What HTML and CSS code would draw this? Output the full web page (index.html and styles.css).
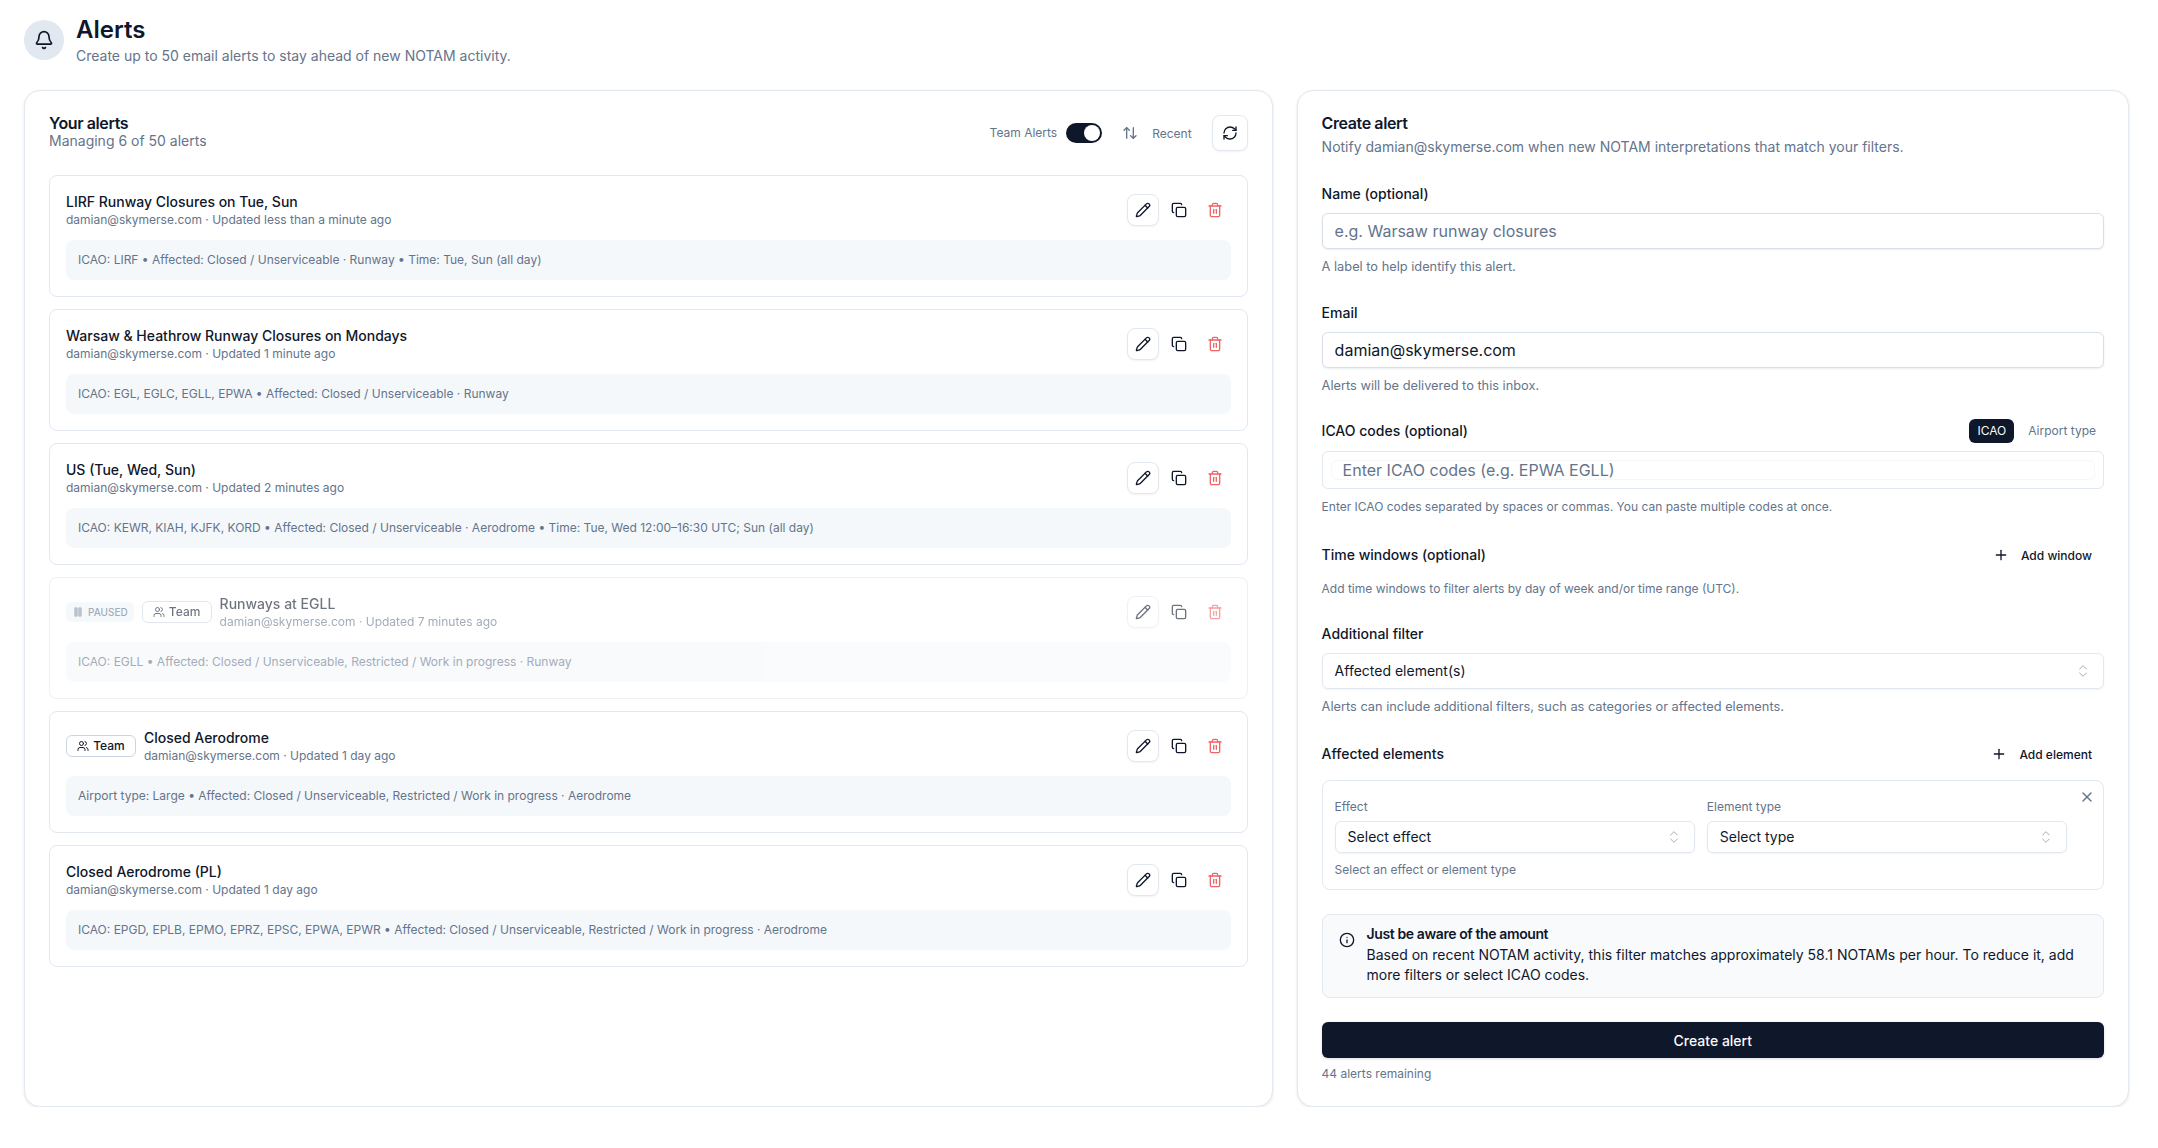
FILE: index.html
```html
<!DOCTYPE html>
<html lang="en">
<head>
    <meta charset="UTF-8">
    <meta name="viewport" content="width=device-width, initial-scale=1.0">
    <title>Alerts</title>
    <link rel="stylesheet" href="styles.css">
</head>
<body>
    <svg class="sprite" aria-hidden="true">
        <symbol id="i-bell" viewBox="0 0 24 24"><path d="M10.268 21a2 2 0 0 0 3.464 0"/><path d="M3.262 15.326A1 1 0 0 0 4 17h16a1 1 0 0 0 .74-1.673C19.41 13.956 18 12.499 18 8A6 6 0 0 0 6 8c0 4.499-1.411 5.956-2.738 7.326"/></symbol>
        <symbol id="i-pencil" viewBox="0 0 24 24"><path d="M21.174 6.812a1 1 0 0 0-3.986-3.987L3.842 16.174a2 2 0 0 0-.5.83l-1.321 4.352a.5.5 0 0 0 .623.622l4.353-1.32a2 2 0 0 0 .83-.497z"/><path d="m15 5 4 4"/></symbol>
        <symbol id="i-copy" viewBox="0 0 24 24"><rect x="8" y="8" width="14" height="14" rx="2"/><path d="M4 16c-1.1 0-2-.9-2-2V4c0-1.1.9-2 2-2h10c1.100 0 2 .9 2 2"/></symbol>
        <symbol id="i-trash" viewBox="0 0 24 24"><path d="M3 6h18"/><path d="M19 6v14c0 1-1 2-2 2H7c-1 0-2-1-2-2V6"/><path d="M8 6V4c0-1 1-2 2-2h4c1 0 2 1 2 2v2"/><path d="M10 11v6"/><path d="M14 11v6"/></symbol>
        <symbol id="i-refresh" viewBox="0 0 24 24"><path d="M3 12a9 9 0 0 1 9-9 9.75 9.75 0 0 1 6.74 2.74L21 8"/><path d="M21 3v5h-5"/><path d="M21 12a9 9 0 0 1-9 9 9.75 9.75 0 0 1-6.74-2.74L3 16"/><path d="M8 16H3v5"/></symbol>
        <symbol id="i-sort" viewBox="0 0 24 24"><path d="m21 16-4 4-4-4"/><path d="M17 20V4"/><path d="m3 8 4-4 4 4"/><path d="M7 4v16"/></symbol>
        <symbol id="i-users" viewBox="0 0 24 24"><path d="M16 21v-2a4 4 0 0 0-4-4H6a4 4 0 0 0-4 4v2"/><circle cx="9" cy="7" r="4"/><path d="M22 21v-2a4 4 0 0 0-3-3.870"/><path d="M16 3.130a4 4 0 0 1 0 7.750"/></symbol>
        <symbol id="i-plus" viewBox="0 0 24 24"><path d="M5 12h14"/><path d="M12 5v14"/></symbol>
        <symbol id="i-x" viewBox="0 0 24 24"><path d="M18 6 6 18"/><path d="m6 6 12 12"/></symbol>
        <symbol id="i-chevrons" viewBox="0 0 24 24"><path d="m7 15 5 5 5-5"/><path d="m7 9 5-5 5 5"/></symbol>
        <symbol id="i-info" viewBox="0 0 24 24"><circle cx="12" cy="12" r="10"/><path d="M12 16v-4"/><path d="M12 8h.01"/></symbol>
        <symbol id="i-pause" viewBox="0 0 24 24"><rect x="14" y="4" width="4" height="16" rx="1"/><rect x="6" y="4" width="4" height="16" rx="1"/></symbol>
    </svg>

    <div class="page">
        <header class="page-header">
            <div class="header-icon"><svg class="icon icon-20"><use href="#i-bell"/></svg></div>
            <div>
                <h1>Alerts</h1>
                <p class="header-sub">Create up to 50 email alerts to stay ahead of new NOTAM activity.</p>
            </div>
        </header>

        <main class="columns">
            <section class="panel">
                <div class="list-head">
                    <div>
                        <h2>Your alerts</h2>
                        <p class="list-count">Managing 6 of 50 alerts</p>
                    </div>
                    <div class="toolbar">
                        <span class="toolbar-label">Team Alerts</span>
                        <span class="switch"><span class="switch-knob"></span></span>
                        <button class="sort-btn"><svg class="icon"><use href="#i-sort"/></svg>Recent</button>
                        <button class="icon-btn icon-btn-lg"><svg class="icon"><use href="#i-refresh"/></svg></button>
                    </div>
                </div>

                <div class="alert-list">
                    <article class="alert-card">
                        <div class="alert-top">
                            <div class="alert-title-row">
                                <div>
                                    <h3>LIRF Runway Closures on Tue, Sun</h3>
                                    <p class="alert-meta">damian@skymerse.com · Updated less than a minute ago</p>
                                </div>
                            </div>
                            <div class="alert-actions">
                                <button class="icon-btn"><svg class="icon"><use href="#i-pencil"/></svg></button>
                                <button class="ghost-btn"><svg class="icon"><use href="#i-copy"/></svg></button>
                                <button class="ghost-btn danger"><svg class="icon"><use href="#i-trash"/></svg></button>
                            </div>
                        </div>
                        <p class="alert-summary">ICAO: LIRF • Affected: Closed / Unserviceable · Runway • Time: Tue, Sun (all day)</p>
                    </article>

                    <article class="alert-card">
                        <div class="alert-top">
                            <div class="alert-title-row">
                                <div>
                                    <h3>Warsaw &amp; Heathrow Runway Closures on Mondays</h3>
                                    <p class="alert-meta">damian@skymerse.com · Updated 1 minute ago</p>
                                </div>
                            </div>
                            <div class="alert-actions">
                                <button class="icon-btn"><svg class="icon"><use href="#i-pencil"/></svg></button>
                                <button class="ghost-btn"><svg class="icon"><use href="#i-copy"/></svg></button>
                                <button class="ghost-btn danger"><svg class="icon"><use href="#i-trash"/></svg></button>
                            </div>
                        </div>
                        <p class="alert-summary">ICAO: EGL, EGLC, EGLL, EPWA • Affected: Closed / Unserviceable · Runway</p>
                    </article>

                    <article class="alert-card">
                        <div class="alert-top">
                            <div class="alert-title-row">
                                <div>
                                    <h3>US (Tue, Wed, Sun)</h3>
                                    <p class="alert-meta">damian@skymerse.com · Updated 2 minutes ago</p>
                                </div>
                            </div>
                            <div class="alert-actions">
                                <button class="icon-btn"><svg class="icon"><use href="#i-pencil"/></svg></button>
                                <button class="ghost-btn"><svg class="icon"><use href="#i-copy"/></svg></button>
                                <button class="ghost-btn danger"><svg class="icon"><use href="#i-trash"/></svg></button>
                            </div>
                        </div>
                        <p class="alert-summary">ICAO: KEWR, KIAH, KJFK, KORD • Affected: Closed / Unserviceable · Aerodrome • Time: Tue, Wed 12:00–16:30 UTC; Sun (all day)</p>
                    </article>

                    <article class="alert-card paused">
                        <div class="alert-top">
                            <div class="alert-title-row">
                                <span class="paused-badge"><svg class="icon icon-fill"><use href="#i-pause"/></svg>PAUSED</span>
                                <span class="team-badge"><svg class="icon icon-12"><use href="#i-users"/></svg>Team</span>
                                <div>
                                    <h3>Runways at EGLL</h3>
                                    <p class="alert-meta">damian@skymerse.com · Updated 7 minutes ago</p>
                                </div>
                            </div>
                            <div class="alert-actions">
                                <button class="icon-btn"><svg class="icon"><use href="#i-pencil"/></svg></button>
                                <button class="ghost-btn"><svg class="icon"><use href="#i-copy"/></svg></button>
                                <button class="ghost-btn danger"><svg class="icon"><use href="#i-trash"/></svg></button>
                            </div>
                        </div>
                        <p class="alert-summary">ICAO: EGLL • Affected: Closed / Unserviceable, Restricted / Work in progress · Runway</p>
                    </article>

                    <article class="alert-card">
                        <div class="alert-top">
                            <div class="alert-title-row">
                                <span class="team-badge"><svg class="icon icon-12"><use href="#i-users"/></svg>Team</span>
                                <div>
                                    <h3>Closed Aerodrome</h3>
                                    <p class="alert-meta">damian@skymerse.com · Updated 1 day ago</p>
                                </div>
                            </div>
                            <div class="alert-actions">
                                <button class="icon-btn"><svg class="icon"><use href="#i-pencil"/></svg></button>
                                <button class="ghost-btn"><svg class="icon"><use href="#i-copy"/></svg></button>
                                <button class="ghost-btn danger"><svg class="icon"><use href="#i-trash"/></svg></button>
                            </div>
                        </div>
                        <p class="alert-summary">Airport type: Large • Affected: Closed / Unserviceable, Restricted / Work in progress · Aerodrome</p>
                    </article>

                    <article class="alert-card">
                        <div class="alert-top">
                            <div class="alert-title-row">
                                <div>
                                    <h3>Closed Aerodrome (PL)</h3>
                                    <p class="alert-meta">damian@skymerse.com · Updated 1 day ago</p>
                                </div>
                            </div>
                            <div class="alert-actions">
                                <button class="icon-btn"><svg class="icon"><use href="#i-pencil"/></svg></button>
                                <button class="ghost-btn"><svg class="icon"><use href="#i-copy"/></svg></button>
                                <button class="ghost-btn danger"><svg class="icon"><use href="#i-trash"/></svg></button>
                            </div>
                        </div>
                        <p class="alert-summary">ICAO: EPGD, EPLB, EPMO, EPRZ, EPSC, EPWA, EPWR • Affected: Closed / Unserviceable, Restricted / Work in progress · Aerodrome</p>
                    </article>
                </div>
            </section>

            <section class="panel">
                <h2>Create alert</h2>
                <p class="form-sub">Notify damian@skymerse.com when new NOTAM interpretations that match your filters.</p>

                <div class="field">
                    <label class="field-label">Name (optional)</label>
                    <input class="text-input" type="text" placeholder="e.g. Warsaw runway closures">
                    <p class="help help-md">A label to help identify this alert.</p>
                </div>

                <div class="field field-email">
                    <label class="field-label">Email</label>
                    <input class="text-input" type="text" value="damian@skymerse.com">
                    <p class="help help-md">Alerts will be delivered to this inbox.</p>
                </div>

                <div class="field field-icao">
                    <div class="field-row field-row-icao">
                        <label class="field-label-plain">ICAO codes (optional)</label>
                        <div class="mode-tabs">
                            <span class="mode-tab active">ICAO</span>
                            <span class="mode-tab">Airport type</span>
                        </div>
                    </div>
                    <div class="code-input">
                        <input type="text" placeholder="Enter ICAO codes (e.g. EPWA EGLL)">
                    </div>
                    <p class="help">Enter ICAO codes separated by spaces or commas. You can paste multiple codes at once.</p>
                </div>

                <div class="field field-control">
                    <div class="field-row">
                        <label class="field-label-plain">Time windows (optional)</label>
                        <button class="add-btn"><svg class="icon"><use href="#i-plus"/></svg>Add window</button>
                    </div>
                    <p class="help">Add time windows to filter alerts by day of week and/or time range (UTC).</p>
                </div>

                <div class="field">
                    <label class="field-label">Additional filter</label>
                    <div class="select">Affected element(s)<svg class="icon select-chevron"><use href="#i-chevrons"/></svg></div>
                    <p class="help help-md">Alerts can include additional filters, such as categories or affected elements.</p>
                </div>

                <div class="field field-affected">
                    <div class="field-row">
                        <label class="field-label-plain">Affected elements</label>
                        <button class="add-btn"><svg class="icon"><use href="#i-plus"/></svg>Add element</button>
                    </div>
                    <div class="element-box">
                        <svg class="icon element-remove"><use href="#i-x"/></svg>
                        <div class="element-grid">
                            <div>
                                <p class="element-label">Effect</p>
                                <div class="select select-sm">Select effect<svg class="icon select-chevron"><use href="#i-chevrons"/></svg></div>
                            </div>
                            <div>
                                <p class="element-label">Element type</p>
                                <div class="select select-sm">Select type<svg class="icon select-chevron"><use href="#i-chevrons"/></svg></div>
                            </div>
                        </div>
                        <p class="help help-tight">Select an effect or element type</p>
                    </div>
                </div>

                <div class="notice">
                    <svg class="icon notice-icon"><use href="#i-info"/></svg>
                    <div>
                        <p class="notice-title">Just be aware of the amount</p>
                        <p>Based on recent NOTAM activity, this filter matches approximately 58.1 NOTAMs per hour. To reduce it, add more filters or select ICAO codes.</p>
                    </div>
                </div>

                <button class="submit-btn">Create alert</button>
                <p class="remaining">44 alerts remaining</p>
            </section>
        </main>
    </div>
</body>
</html>
```

FILE: styles.css
```css
* {
    margin: 0;
    padding: 0;
    box-sizing: border-box;
}

body {
    background: #ffffff;
    color: #0f172a;
    font-family: 'Inter', 'Liberation Sans', sans-serif;
    font-size: 14px;
    line-height: 20px;
}

button {
    font-family: inherit;
    background: none;
    border: none;
    color: inherit;
}

.sprite {
    display: none;
}

.icon {
    width: 16px;
    height: 16px;
    flex-shrink: 0;
    fill: none;
    stroke: currentColor;
    stroke-width: 2;
    stroke-linecap: round;
    stroke-linejoin: round;
}

.icon-20 {
    width: 20px;
    height: 20px;
}

.icon-12 {
    width: 12px;
    height: 12px;
}

.icon-fill {
    width: 12px;
    height: 12px;
    fill: currentColor;
    stroke-width: 3;
    opacity: 0.7;
}

.page {
    padding: 14px 29px 0 24px;
}

/* Header */
.page-header {
    display: flex;
    align-items: center;
    gap: 12px;
}

.header-icon {
    width: 40px;
    height: 40px;
    border-radius: 50%;
    background: #e2e8f0;
    display: flex;
    align-items: center;
    justify-content: center;
}

h1 {
    font-size: 24px;
    line-height: 32px;
    font-weight: 600;
}

.header-sub {
    color: #64748b;
}

/* Columns */
.columns {
    display: grid;
    grid-template-columns: 3fr 2fr;
    gap: 24px;
    margin-top: 24px;
}

.panel {
    border: 1px solid #e2e8f0;
    border-radius: 16px;
    padding: 24px;
    box-shadow: 0 1px 3px rgba(15, 23, 42, 0.1);
    background: #ffffff;
}

h2 {
    font-size: 16px;
    line-height: 16px;
    font-weight: 600;
    letter-spacing: -0.4px;
}

/* Alert list */
.list-head {
    display: flex;
    justify-content: space-between;
    align-items: flex-start;
}

.list-count {
    color: #64748b;
}

.toolbar {
    display: flex;
    align-items: center;
    height: 36px;
    gap: 9px;
}

.toolbar-label {
    font-size: 12px;
    color: #64748b;
}

.switch {
    width: 36px;
    height: 20px;
    border-radius: 10px;
    background: #0f172a;
    padding: 2px;
    display: flex;
    justify-content: flex-end;
}

.switch-knob {
    width: 16px;
    height: 16px;
    border-radius: 50%;
    background: #ffffff;
}

.sort-btn {
    display: flex;
    align-items: center;
    gap: 14px;
    height: 36px;
    margin-left: -1px;
    padding: 0 11px 0 12px;
    font-size: 12px;
    color: #64748b;
}

.icon-btn {
    width: 32px;
    height: 32px;
    border: 1px solid #e2e8f0;
    border-radius: 8px;
    background: #ffffff;
    box-shadow: 0 1px 2px rgba(15, 23, 42, 0.05);
    display: flex;
    align-items: center;
    justify-content: center;
}

.icon-btn-lg {
    width: 36px;
    height: 36px;
}

.ghost-btn {
    width: 32px;
    height: 32px;
    display: flex;
    align-items: center;
    justify-content: center;
}

.danger {
    color: #f26363;
}

.alert-list {
    display: flex;
    flex-direction: column;
    gap: 12px;
    margin-top: 24px;
}

.alert-card {
    border: 1px solid #e2e8f0;
    border-radius: 8px;
    padding: 16px;
}

.alert-top {
    display: flex;
    justify-content: space-between;
    align-items: center;
    height: 36px;
}

.alert-title-row {
    display: flex;
    align-items: center;
    gap: 8px;
}

h3 {
    font-size: 14px;
    line-height: 20px;
    font-weight: 500;
}

.alert-meta {
    font-size: 12px;
    line-height: 16px;
    color: #64748b;
}

.alert-actions {
    display: flex;
    gap: 4px;
}

.alert-summary {
    margin-top: 12px;
    height: 40px;
    padding: 0 12px;
    display: flex;
    align-items: center;
    background: #f5f8fb;
    border-radius: 8px;
    font-size: 12px;
    color: #64748b;
}

.paused {
    border-color: #edf0f5;
}

.paused > * {
    opacity: 0.6;
}

.paused-badge {
    display: flex;
    align-items: center;
    gap: 4px;
    height: 20px;
    padding: 0 6px;
    background: #f1f5f9;
    border-radius: 4px;
    font-size: 10px;
    font-weight: 500;
    color: #64748b;
}

.team-badge {
    display: flex;
    align-items: center;
    gap: 4px;
    height: 22px;
    padding: 0 10.2px;
    border: 1px solid #cbd5e1;
    border-radius: 6px;
    font-size: 12px;
    font-weight: 500;
    white-space: nowrap;
}

/* Create form */
.form-sub {
    margin-top: 6px;
    color: #64748b;
}

.field {
    margin-top: 27px;
}

.field-email {
    margin-top: 28px;
}

.field-icao {
    margin-top: 25px;
}

.field-control {
    margin-top: 24px;
}

.field-affected {
    margin-top: 23px;
}

.field-label {
    display: block;
    font-weight: 500;
    margin-bottom: 9px;
}

.field-label-plain {
    font-weight: 500;
}

.field-row {
    display: flex;
    justify-content: space-between;
    align-items: center;
    height: 32px;
}

.field-row-icao {
    height: 24px;
    margin-bottom: 8px;
}

.text-input {
    display: block;
    width: 100%;
    height: 36px;
    padding: 0 12px;
    border: 1px solid #d9dfe8;
    border-radius: 6px;
    background: #ffffff;
    box-shadow: 0 1px 2px rgba(15, 23, 42, 0.08);
    font-family: inherit;
    font-size: 16px;
    color: #0f172a;
}

input::placeholder {
    color: #64748b;
    opacity: 1;
}

.help {
    margin-top: 10px;
    font-size: 12px;
    line-height: 16px;
    color: #64748b;
}

.help-md {
    font-size: 12.8px;
}

.mode-tabs {
    display: flex;
}

.mode-tab {
    height: 24px;
    padding: 0 8px;
    margin-left: 6px;
    border-radius: 6px;
    display: flex;
    align-items: center;
    font-size: 12px;
    color: #64748b;
}

.mode-tab.active {
    background: #0f172a;
    color: #f8fafc;
}

.code-input {
    border: 1px solid #e2e8f0;
    border-radius: 6px;
    padding: 8px;
}

.code-input input {
    display: block;
    width: 100%;
    height: 20px;
    padding: 0 11px;
    border: 1px solid #f5f7fa;
    border-radius: 6px;
    font-family: inherit;
    font-size: 16px;
    outline: none;
}

.add-btn {
    display: flex;
    align-items: center;
    gap: 12px;
    height: 32px;
    padding: 0 12px;
    font-size: 12px;
    font-weight: 500;
}

.select {
    display: flex;
    justify-content: space-between;
    align-items: center;
    height: 36px;
    padding: 0 12px;
    border: 1px solid #e2e8f0;
    border-radius: 6px;
    box-shadow: 0 1px 2px rgba(15, 23, 42, 0.05);
}

.select-sm {
    height: 32px;
}

.select-chevron {
    color: #64748b;
    opacity: 0.6;
    stroke-width: 1.5;
}

.element-box {
    position: relative;
    margin-top: 10px;
    border: 1px solid #e2e8f0;
    border-radius: 8px;
    padding: 18px 36px 11px 12px;
}

.element-remove {
    position: absolute;
    top: 8px;
    right: 8px;
    color: #64748b;
}

.element-grid {
    display: grid;
    grid-template-columns: 1fr 1fr;
    gap: 12px;
}

.element-label {
    font-size: 12px;
    line-height: 16px;
    color: #64748b;
    margin-bottom: 6px;
}

.help-tight {
    margin-top: 9px;
}

.notice {
    display: flex;
    gap: 12px;
    margin-top: 24px;
    padding: 9px 16px 12px;
    border: 1px solid #e2e8f0;
    border-radius: 8px;
    background: #f8fafc;
}

.notice-icon {
    margin-top: 8px;
}

.notice-title {
    font-weight: 600;
    letter-spacing: -0.4px;
    margin-bottom: 1px;
}

.submit-btn {
    display: block;
    width: 100%;
    height: 36px;
    margin-top: 24px;
    border-radius: 6px;
    background: #0f172a;
    color: #f8fafc;
    font-size: 14px;
    font-weight: 500;
    box-shadow: 0 1px 3px rgba(15, 23, 42, 0.15);
}

.remaining {
    margin-top: 8px;
    font-size: 12px;
    line-height: 16px;
    color: #64748b;
}
```
